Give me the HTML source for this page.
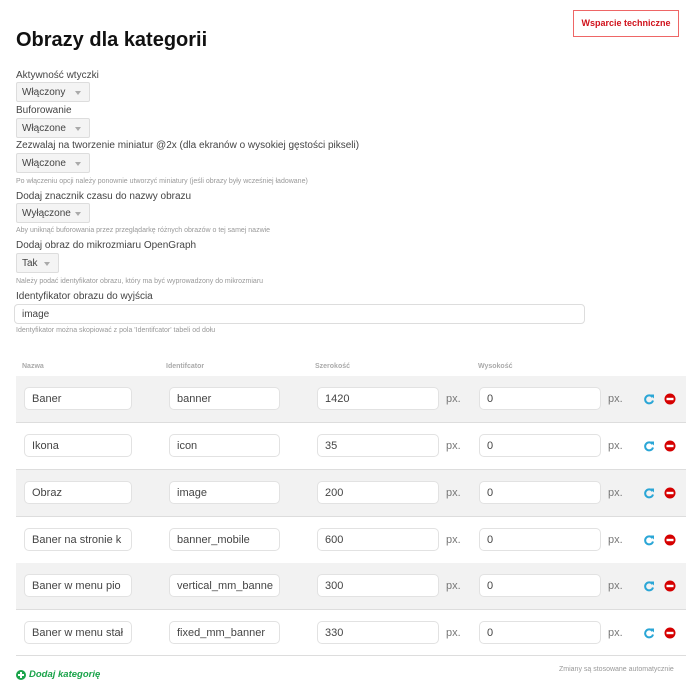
<!DOCTYPE html>
<html><head><meta charset="utf-8"><style>
*{box-sizing:border-box;margin:0;padding:0}
body{width:700px;height:694px;background:#fff;font-family:"Liberation Sans",sans-serif;color:#333;position:relative;overflow:hidden}
.a{position:absolute;white-space:nowrap}
.lbl{font-size:10px;color:#444}
.help{font-size:7px;color:#999}
.sel{position:absolute;height:20px;background:#f4f4f4;border:1px solid #ddd;border-radius:2px;font-size:10px;color:#444;padding:4px 0 0 5px}
.sel:after{content:"";position:absolute;right:8px;top:8px;border-left:3px solid transparent;border-right:3px solid transparent;border-top:4px solid #aaa}
.row{position:absolute;left:16px;width:670px;height:47px;border-bottom:1px solid #ddd}
.g{background:#f2f2f2}
.in{position:absolute;height:23px;background:#fff;border:1px solid #e2e2e2;border-radius:5px;font-size:11px;color:#444;padding:5px 0 0 7px;overflow:hidden;white-space:nowrap}
.px{position:absolute;font-size:11px;color:#777}
.th{font-size:7px;color:#aaa;font-weight:bold}
</style></head><body>
<div class="a" style="left:573px;top:10px;width:106px;height:27px;border:1px solid #e66;color:#d0111b;font-size:9px;font-weight:bold;text-align:center;line-height:25px">Wsparcie techniczne</div>
<div class="a" style="left:16px;top:29px;font-size:20px;font-weight:bold;color:#111">Obrazy dla kategorii</div>

<div class="a lbl" style="left:16px;top:70px">Aktywność wtyczki</div>
<div class="sel" style="left:16px;top:82px;width:74px">Włączony</div>
<div class="a lbl" style="left:16px;top:105px">Buforowanie</div>
<div class="sel" style="left:16px;top:118px;width:74px">Włączone</div>
<div class="a lbl" style="left:16px;top:140px">Zezwalaj na tworzenie miniatur @2x (dla ekranów o wysokiej gęstości pikseli)</div>
<div class="sel" style="left:16px;top:153px;width:74px">Włączone</div>
<div class="a help" style="left:16px;top:178px">Po włączeniu opcji należy ponownie utworzyć miniatury (jeśli obrazy były wcześniej ładowane)</div>
<div class="a lbl" style="left:16px;top:191px">Dodaj znacznik czasu do nazwy obrazu</div>
<div class="sel" style="left:16px;top:203px;width:74px">Wyłączone</div>
<div class="a help" style="left:16px;top:227px">Aby uniknąć buforowania przez przeglądarkę różnych obrazów o tej samej nazwie</div>
<div class="a lbl" style="left:16px;top:240px">Dodaj obraz do mikrozmiaru OpenGraph</div>
<div class="sel" style="left:16px;top:253px;width:43px">Tak</div>
<div class="a help" style="left:16px;top:278px">Należy podać identyfikator obrazu, który ma być wyprowadzony do mikrozmiaru</div>
<div class="a lbl" style="left:16px;top:291px">Identyfikator obrazu do wyjścia</div>
<div class="a" style="left:14px;top:304px;width:571px;height:20px;border:1px solid #ddd;border-radius:4px;font-size:10px;color:#444;padding:4px 0 0 7px">image</div>
<div class="a help" style="left:16px;top:327px">Identyfikator można skopiować z pola 'Identifcator' tabeli od dołu</div>

<div class="a th" style="left:22px;top:363px">Nazwa</div>
<div class="a th" style="left:166px;top:363px">Identifcator</div>
<div class="a th" style="left:315px;top:363px">Szerokość</div>
<div class="a th" style="left:478px;top:363px">Wysokość</div>

<div id="rows"></div>
<script>
var d=[["Baner","banner","1420"],["Ikona","icon","35"],["Obraz","image","200"],["Baner na stronie k","banner_mobile","600"],["Baner w menu pio","vertical_mm_banne","300"],["Baner w menu stał","fixed_mm_banner","330"]];
var tops=[376,423,470,517,563,610],h="";
for(var i=0;i<6;i++){var t=tops[i];
h+='<div class="row'+(i%2==0?' g':'')+'" style="top:'+t+'px;height:'+(i==5?46:47)+'px"></div>';
var y=t+11;
h+='<div class="in" style="left:24px;top:'+y+'px;width:108px">'+d[i][0]+'</div>';
h+='<div class="in" style="left:169px;top:'+y+'px;width:111px">'+d[i][1]+'</div>';
h+='<div class="in" style="left:317px;top:'+y+'px;width:122px">'+d[i][2]+'</div>';
h+='<div class="px" style="left:446px;top:'+(y+6)+'px">px.</div>';
h+='<div class="in" style="left:479px;top:'+y+'px;width:122px">0</div>';
h+='<div class="px" style="left:608px;top:'+(y+6)+'px">px.</div>';
h+='<svg class="a" style="left:643px;top:'+(y+6)+'px" width="12" height="12" viewBox="0 0 12 12"><path d="M9.5 4.2A4 4 0 1 0 10 7.5" fill="none" stroke="#2aa6d6" stroke-width="2"/><path d="M7 1.5L11 1.5L11 5.5Z" fill="#2aa6d6"/></svg>';
h+='<svg class="a" style="left:664px;top:'+(y+6)+'px" width="12" height="12" viewBox="0 0 12 12"><circle cx="6" cy="6" r="5.5" fill="#d50000"/><rect x="2.5" y="4.8" width="7" height="2.4" fill="#fff"/></svg>';
}
document.getElementById('rows').innerHTML=h;
</script>
<svg class="a" style="left:16px;top:670px" width="10" height="10" viewBox="0 0 10 10"><circle cx="5" cy="5" r="5" fill="#1aa34a"/><rect x="2" y="4" width="6" height="2" fill="#fff"/><rect x="4" y="2" width="2" height="6" fill="#fff"/></svg>
<div class="a" style="left:29px;top:669px;font-size:9.5px;font-weight:bold;font-style:italic;color:#1aa34a">Dodaj kategorię</div>
<div class="a" style="left:559px;top:666px;font-size:7px;color:#999">Zmiany są stosowane automatycznie</div>
</body></html>
